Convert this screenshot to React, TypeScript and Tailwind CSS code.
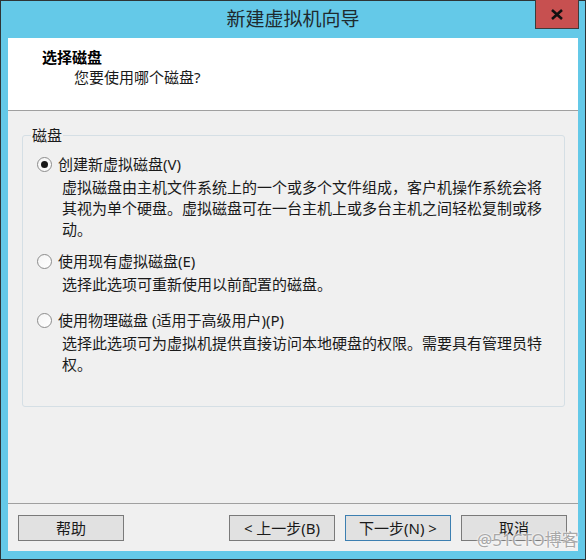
const RadioDot = ({ checked }: { checked?: boolean }) => (
  <span className="w-[15px] h-[15px] rounded-full border border-[#8c8c8c] bg-gradient-to-br from-[#f4f4f4] to-white flex items-center justify-center shrink-0">
    {checked && <span className="w-[7px] h-[7px] rounded-full bg-[#1a1a1a]" />}
  </span>
);

const Option = ({
  label,
  checked,
  lines,
  className,
}: {
  label: string;
  checked?: boolean;
  lines: string[];
  className?: string;
}) => (
  <div className={className}>
    <div className="flex items-center gap-[6px] pl-[14px] h-[20px]">
      <RadioDot checked={checked} />
      <span className="leading-[20px] text-[#1a1a1a]">{label}</span>
    </div>
    <div className="pl-[39px] mt-[3px] leading-[21px] text-[#1a1a1a] whitespace-nowrap">
      {lines.map((l) => (
        <div key={l}>{l}</div>
      ))}
    </div>
  </div>
);

const WinButton = ({ children, focused }: { children: React.ReactNode; focused?: boolean }) => (
  <button
    className={`w-[106px] h-[26px] bg-[#e1e1e1] border text-[15px] leading-none text-[#1a1a1a] flex items-center justify-center whitespace-nowrap ${
      focused ? "border-[#3c7fb1]" : "border-[#7a7a7a]"
    }`}
  >
    {children}
  </button>
);

export default function App() {
  return (
    <div className="relative w-[586px] h-[560px] bg-[#64c9e8] border border-[#2e3436] flex flex-col font-['Noto_Sans','Noto_Sans_CJK_SC',sans-serif] text-[15px]">
      {/* title bar */}
      <div className="relative h-[37px] shrink-0 flex items-center justify-center">
        <span className="text-[19px] text-[#1e2a2e]">新建虚拟机向导</span>
        <div className="absolute right-[6px] top-[-1px] w-[44px] h-[29px] bg-[#c75050] border border-[#3c3c3c] border-t-0 flex items-center justify-center">
          <svg width="14" height="11" viewBox="0 0 14 11">
            <path d="M2 1 L12 10 M12 1 L2 10" stroke="#111" strokeWidth="2.6" />
          </svg>
        </div>
      </div>

      {/* client */}
      <div className="mx-[7px] h-[513px] bg-[#f0f0f0] flex flex-col">
        <div className="h-[73px] shrink-0 bg-white border-b border-[#a0a0a0] pt-[9px]">
          <div className="pl-[34px] leading-[20px] font-bold text-[15px] text-black">选择磁盘</div>
          <div className="pl-[66px] leading-[20px] text-[#1a1a1a]">您要使用哪个磁盘?</div>
        </div>

        <div className="flex-1 pl-[14px] pr-[13px] pt-[24px]">
          <div className="relative h-[272px] border border-[#d5dfe5] rounded-[3px]">
            <span className="absolute left-[8px] top-[-11px] px-[1px] bg-[#f0f0f0] leading-[20px] text-[#1a1a1a]">
              磁盘
            </span>
            <Option
              className="pt-[18px]"
              checked
              label="创建新虚拟磁盘(V)"
              lines={[
                "虚拟磁盘由主机文件系统上的一个或多个文件组成，客户机操作系统会将",
                "其视为单个硬盘。虚拟磁盘可在一台主机上或多台主机之间轻松复制或移",
                "动。",
              ]}
            />
            <Option
              className="mt-[11px]"
              label="使用现有虚拟磁盘(E)"
              lines={["选择此选项可重新使用以前配置的磁盘。"]}
            />
            <Option
              className="mt-[15px]"
              label="使用物理磁盘 (适用于高级用户)(P)"
              lines={["选择此选项可为虚拟机提供直接访问本地硬盘的权限。需要具有管理员特", "权。"]}
            />
          </div>
        </div>

        <div className="h-[48px] shrink-0 border-t border-[#a0a0a0] pt-[11px] pl-[10px] pr-[11px] flex">
          <WinButton>帮助</WinButton>
          <div className="flex-1" />
          <div className="flex gap-[10px]">
            <WinButton>&lt; 上一步(B)</WinButton>
            <WinButton focused>下一步(N) &gt;</WinButton>
            <WinButton>取消</WinButton>
          </div>
        </div>
      </div>

      {/* watermark */}
      <div className="absolute left-[476px] top-[529px] whitespace-nowrap text-[17px] leading-[20px] text-[#a8a8a8] [text-shadow:0_0_2px_#fff,0_0_2px_#fff]">
        @51CTO博客
      </div>
    </div>
  );
}
